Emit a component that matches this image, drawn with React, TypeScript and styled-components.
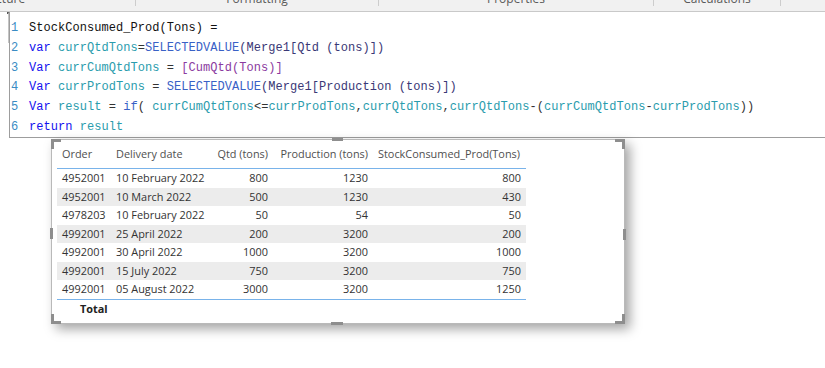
import React from "react";
import styled, { createGlobalStyle } from "styled-components";

const Global = createGlobalStyle`
  html, body { margin: 0; padding: 0; background: #ffffff; overflow: hidden; }
  * { box-sizing: border-box; }
`;

const Page = styled.div`
  width: 825px;
  height: 368px;
  display: flex;
  flex-direction: column;
  background: #ffffff;
  overflow: hidden;
`;

const TabStrip = styled.div`
  height: 12px;
  flex: none;
  display: flex;
  background: #f1f1f1;
  border-bottom: 1px solid #c9c9c9;
  overflow: hidden;
`;

const Tab = styled.div<{ $w: number; $shift?: number }>`
  width: ${(p) => p.$w}px;
  flex: none;
  height: 6px;
  display: flex;
  justify-content: ${(p) => (p.$shift ? "flex-start" : "center")};
  border-right: 1px solid #cdcdcd;
  overflow: visible;
`;

const TabLabel = styled.span<{ $shift?: number }>`
  font-family: "Open Sans", "Liberation Sans", sans-serif;
  font-size: 12px;
  line-height: 16px;
  color: #5a5a5a;
  margin-top: -9px;
  margin-left: ${(p) => p.$shift ?? 0}px;
  white-space: nowrap;
`;

const EditorRow = styled.div`
  display: flex;
  height: 126px;
  flex: none;
`;

const LeftStub = styled.div`
  width: 9px;
  flex: none;
  display: flex;
  justify-content: flex-end;
`;

const StubTick = styled.div`
  width: 2px;
  height: 31px;
  border-right: 1px solid #c4c4c4;
  border-top: 2px solid #555;
`;

const Editor = styled.div`
  flex: 1;
  background: #ffffff;
  border-left: 1px solid #9d9d9d;
  border-bottom: 1px solid #9d9d9d;
  padding-top: 7px;
  font-family: "Liberation Mono", "DejaVu Sans Mono", monospace;
  font-size: 12px;
  letter-spacing: 0.05px;
  white-space: pre;
`;

const CodeLine = styled.div`
  display: flex;
  height: 19.8px;
  line-height: 19.8px;
`;

const LineNo = styled.span`
  width: 19px;
  flex: none;
  padding-left: 1px;
  color: #3a8cc4;
`;

const colors: Record<string, string> = {
  plain: "#111111",
  kw: "#1212ee",
  v: "#2a9cad",
  fn: "#3961c6",
  ref: "#3a3876",
  m: "#8b3aa0",
  op: "#333333",
};

const Tok = styled.span<{ $k: string }>`
  color: ${(p) => colors[p.$k]};
`;

type T = [string, string];
const code: T[][] = [
  [["plain", "StockConsumed_Prod(Tons) ="]],
  [["kw", "var"], ["op", " "], ["v", "currQtdTons"], ["op", "="], ["fn", "SELECTEDVALUE"], ["ref", "(Merge1[Qtd (tons)])"]],
  [["kw", "Var"], ["op", " "], ["v", "currCumQtdTons"], ["op", " = "], ["m", "[CumQtd(Tons)]"]],
  [["kw", "Var"], ["op", " "], ["v", "currProdTons"], ["op", " = "], ["fn", "SELECTEDVALUE"], ["ref", "(Merge1[Production (tons)])"]],
  [
    ["kw", "Var"], ["op", " "], ["v", "result"], ["op", " = "], ["fn", "if"], ["op", "( "],
    ["v", "currCumQtdTons"], ["op", "<="], ["v", "currProdTons"], ["op", ","], ["v", "currQtdTons"], ["op", ","],
    ["v", "currQtdTons"], ["op", "-("], ["v", "currCumQtdTons"], ["op", "-"], ["v", "currProdTons"], ["op", "))"],
  ],
  [["kw", "return"], ["op", " "], ["v", "result"]],
];

const VisualArea = styled.div`
  padding-left: 51px;
  padding-top: 1px;
`;

const Frame = styled.div`
  position: relative;
  width: 574px;
  height: 185px;
  border: 1px solid #b9b9b9;
  background: #ffffff;
  box-shadow: 5px 5px 11px rgba(0, 0, 0, 0.36);
  padding: 6px 0 0 5px;
`;

const Handle = styled.div<{ $pos: string }>`
  position: absolute;
  background: #8e8e8e;
  ${(p) => {
    switch (p.$pos) {
      case "top":
        return "top: -2px; left: 280px; width: 11px; height: 3px;";
      case "bottom":
        return "bottom: -2px; left: 279px; width: 12px; height: 3px;";
      case "left":
        return "left: -2px; top: 88px; width: 3px; height: 11px;";
      case "right":
        return "right: -2px; top: 89px; width: 3px; height: 11px;";
      default:
        return "";
    }
  }}
`;

const Corner = styled.div<{ $v: "t" | "b"; $h: "l" | "r" }>`
  position: absolute;
  width: 10px;
  height: 10px;
  ${(p) => (p.$v === "t" ? "top: -1px;" : "bottom: -1px;")}
  ${(p) => (p.$h === "l" ? "left: -1px;" : "right: -1px;")}
  ${(p) => (p.$v === "t" ? "border-top" : "border-bottom")}: 3px solid #8e8e8e;
  ${(p) => (p.$h === "l" ? "border-left" : "border-right")}: 3px solid #8e8e8e;
`;

const Table = styled.table`
  border-collapse: collapse;
  table-layout: fixed;
  width: 469px;
  font-family: "Open Sans", "Liberation Sans", sans-serif;
  font-size: 10.9px;
  color: #333333;
`;

const HeadCell = styled.th<{ $right?: boolean; $w: number }>`
  width: ${(p) => p.$w}px;
  font-weight: 400;
  color: #4f4f4f;
  text-align: ${(p) => (p.$right ? "right" : "left")};
  line-height: 16px;
  padding: 0 5px 6px 5px;
  border-bottom: 1px solid #79b3ea;
  white-space: nowrap;
`;

const Row = styled.tr<{ $band: boolean }>`
  background: ${(p) => (p.$band ? "#ececec" : "#ffffff")};
  height: 18.5px;
`;

const Cell = styled.td<{ $right?: boolean }>`
  text-align: ${(p) => (p.$right ? "right" : "left")};
  padding: 0 5px;
  line-height: 18.5px;
  white-space: nowrap;
`;

const LastRow = styled(Row)`
  border-bottom: 1px solid #79b3ea;
`;

const TotalCell = styled.td`
  font-weight: 700;
  color: #222222;
  padding: 0 0 0 23px;
  height: 18px;
  line-height: 18px;
`;

const rows: [string, string, string, string, string][] = [
  ["4952001", "10 February 2022", "800", "1230", "800"],
  ["4952001", "10 March 2022", "500", "1230", "430"],
  ["4978203", "10 February 2022", "50", "54", "50"],
  ["4992001", "25 April 2022", "200", "3200", "200"],
  ["4992001", "30 April 2022", "1000", "3200", "1000"],
  ["4992001", "15 July 2022", "750", "3200", "750"],
  ["4992001", "05 August 2022", "3000", "3200", "1250"],
];

export default function App() {
  return (
    <Page>
      <Global />
      <TabStrip>
        <Tab $w={136} $shift={1}>
          <TabLabel $shift={-27}>Structure</TabLabel>
        </Tab>
        <Tab $w={243}>
          <TabLabel>Formatting</TabLabel>
        </Tab>
        <Tab $w={275}>
          <TabLabel>Properties</TabLabel>
        </Tab>
        <Tab $w={127}>
          <TabLabel>Calculations</TabLabel>
        </Tab>
      </TabStrip>
      <EditorRow>
        <LeftStub>
          <StubTick />
        </LeftStub>
        <Editor>
          {code.map((line, i) => (
            <CodeLine key={i}>
              <LineNo>{i + 1}</LineNo>
              <span>
                {line.map(([k, t], j) => (
                  <Tok key={j} $k={k}>
                    {t}
                  </Tok>
                ))}
              </span>
            </CodeLine>
          ))}
        </Editor>
      </EditorRow>
      <VisualArea>
        <Frame>
          <Corner $v="t" $h="l" />
          <Corner $v="t" $h="r" />
          <Corner $v="b" $h="l" />
          <Corner $v="b" $h="r" />
          <Handle $pos="top" />
          <Handle $pos="bottom" />
          <Handle $pos="left" />
          <Handle $pos="right" />
          <Table>
            <thead>
              <tr>
                <HeadCell $w={54}>Order</HeadCell>
                <HeadCell $w={101}>Delivery date</HeadCell>
                <HeadCell $w={61} $right>Qtd (tons)</HeadCell>
                <HeadCell $w={100} $right>Production (tons)</HeadCell>
                <HeadCell $w={153}>StockConsumed_Prod(Tons)</HeadCell>
              </tr>
            </thead>
            <tbody>
              {rows.map((r, i) => {
                const R = i === rows.length - 1 ? LastRow : Row;
                return (
                  <R key={i} $band={i % 2 === 1}>
                    <Cell>{r[0]}</Cell>
                    <Cell>{r[1]}</Cell>
                    <Cell $right>{r[2]}</Cell>
                    <Cell $right>{r[3]}</Cell>
                    <Cell $right>{r[4]}</Cell>
                  </R>
                );
              })}
              <tr>
                <TotalCell colSpan={5}>Total</TotalCell>
              </tr>
            </tbody>
          </Table>
        </Frame>
      </VisualArea>
    </Page>
  );
}
